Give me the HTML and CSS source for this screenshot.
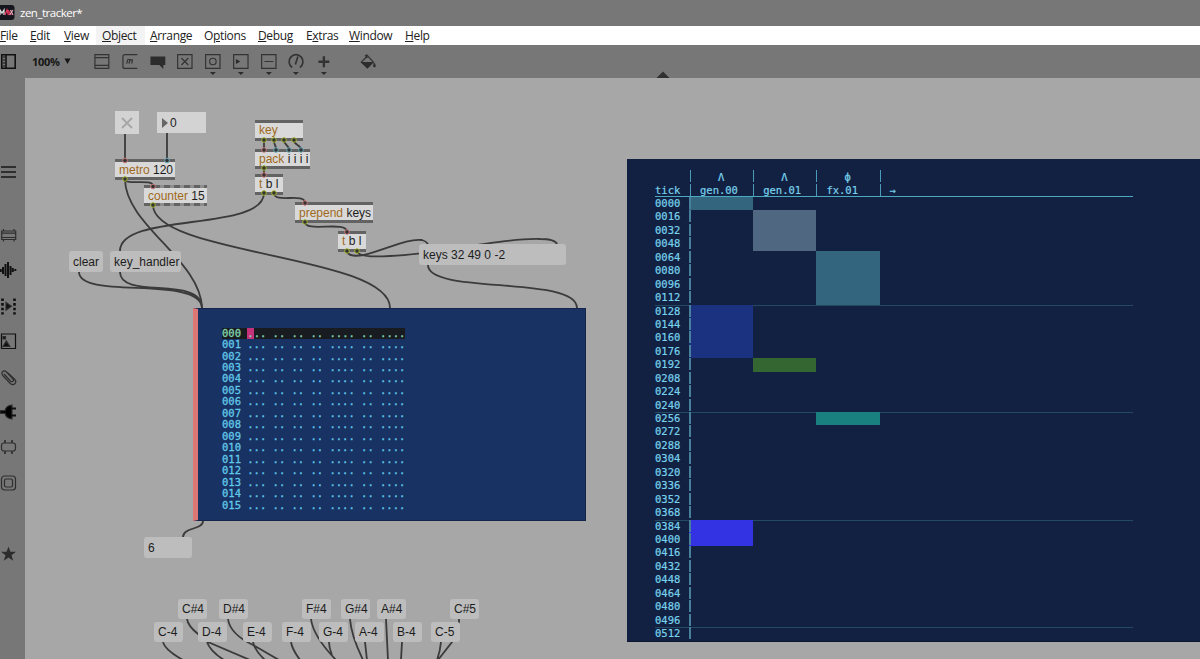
FILE: index.html
```
<!DOCTYPE html>
<html>
	<head>
		<meta charset="UTF-8">
		<title>zen_tracker*</title>
		<link rel="stylesheet" href="styles.css">
	</head>
	<body>
		<div id="window">
			<div id="titlebar">
				<svg width="15" height="15" viewBox="0 0 15 15">
					<rect x="-3" width="17.500" height="15" rx="3" fill="#15151d"/>
					<path d="M0 10V5l2 3 2-3v5" fill="none" stroke="#ddd" stroke-width="1.300"/>
					<path d="M5 10l2-5 1.500 5M8 5l3 5" fill="none" stroke="#e0355c" stroke-width="1.400"/>
					<path d="M13 5l-3.500 5M10.500 5l2.500 5" fill="none" stroke="#e9a3b3" stroke-width="1.200"/>
				</svg>
				<span>zen_tracker*</span>
			</div>
			<div id="menubar">
				<span><u>F</u>ile</span>
				<span><u>E</u>dit</span>
				<span><u>V</u>iew</span>
				<span class="hot"><u>O</u>bject</span>
				<span><u>A</u>rrange</span>
				<span>O<u>p</u>tions</span>
				<span><u>D</u>ebug</span>
				<span>E<u>x</u>tras</span>
				<span><u>W</u>indow</span>
				<span><u>H</u>elp</span>
			</div>
			<div id="toolbar">
				<svg class="panelIcon" width="18" height="33" viewBox="0 0 18 33"><path d="M1.800 9.800h13.400v13.400H1.800zM6 9.800v13.400" fill="none" stroke="#111" stroke-width="1.600"/><path d="M3 12h2M3 15h2M3 18h2M3 21h2" stroke="#111"/></svg>
				<span id="zoom">100%</span>
				<svg class="zoomArrow" width="7" height="33" viewBox="0 0 7 33"><path d="M.5 13.500h6L3.500 19z" fill="#161616"/></svg>
				<svg class="tool" viewBox="0 0 28 33"><path d="M6.500 9.500h15M6.500 12.500h15M6.500 20.500h15M6.500 23.500h15M7 9v14.500M21 9v14.500"/></svg>
				<svg class="tool" viewBox="0 0 28 33"><path d="M21.500 9.500H9q-2 0-2 2v10q0 2 2 2h12.500"/><path d="M10.800 18.700l1-4q2.500-1.200 2 .8l-.7 3.200.8-3.200q3-2 2.500.3l-.5 2.900"/></svg>
				<svg class="tool" viewBox="0 0 28 33"><path class="solid" d="M6.500 11.500h15v8.500h-2v4l-4-4h-9z"/></svg>
				<svg class="tool" viewBox="0 0 28 33"><path d="M6.700 9.500h14.500v14H6.700zM10.500 13l7 7M17.500 13l-7 7"/></svg>
				<svg class="tool" viewBox="0 0 28 33"><path d="M6.700 9.500h14.500v14H6.700z"/><circle cx="14" cy="16.500" r="3.300"/><path class="solid" d="M11 27h6l-3 3.200z"/></svg>
				<svg class="tool" viewBox="0 0 28 33"><path d="M6.700 9.500h14.500v14H6.700z"/><path class="solid" d="M9 14l4.500 2.500L9 19zM11 27h6l-3 3.200z"/></svg>
				<svg class="tool" viewBox="0 0 28 33"><path d="M6.700 9.500h14.500v14H6.700zM9.500 16.500h9"/><path class="solid" d="M11 27h6l-3 3.200z"/></svg>
				<svg class="tool" viewBox="0 0 28 33"><path class="thick" d="M10.300 22.500A7 7 0 1 1 18 22.500M13.500 19.500l2.500-8"/><path class="solid" d="M11 27h6l-3 3.200z"/></svg>
				<svg class="tool" viewBox="0 0 28 33"><path class="plus" d="M14 11.200v11M8.500 16.700h11"/><path class="solid" d="M11 27h6l-3 3.200z"/></svg>
				<svg class="tool bucket" viewBox="0 0 28 33"><path d="M11 11l2-1 6.500 7-6 6-6-6 5-5"/><path class="solid" d="M6.500 17h13l-6 6.200zM12 9l2 4h-2zM20 17q3 4 1.500 5-3 1-2-2z"/></svg>
				<svg class="fold" width="14" height="7" viewBox="0 0 14 7"><path d="M.5 7L7 .5 13.500 7z" fill="#303030"/></svg>
			</div>
			<div id="main">
				<div id="sidebar">
					<svg class="menuIcon" viewBox="0 0 17 18"><path class="bold" d="M1 4h15M1 9h15M1 14h15"/></svg>
					<svg viewBox="0 0 17 18"><path d="M1.700 5h14v8.500h-14zM1.700 7.200h14M3.500 3v2M14 3v2M3.500 13.500v2M14 13.500v2M1.700 11.500h14"/></svg>
					<svg viewBox="0 0 17 18"><path class="bold black" d="M.8 8v3M3 6v7M5.500 3v12M8 1v16M10.500 5v9M12.800 7v4M15.300 8v2"/></svg>
					<svg viewBox="0 0 17 18"><path class="film" d="M2.500 1.500v16M14.500 1.500v16"/><path d="M6 5.500l5.500 3.700L6 13z" fill="#111"/></svg>
					<svg viewBox="0 0 17 18"><path class="black" d="M1.500 2h14v14.500h-14z"/><path d="M3 14.500l3.300-5.500 3.500 5.500zM3 4.500h2.500V7H3z" fill="#111"/></svg>
					<svg viewBox="0 0 17 18"><path d="M4 6l6.500 7q1.500 1.300 2.500.3t0-2.300L6.500 4Q4.500 2 2.800 3.500t0 4l7.500 8q2.500 2 4.500.2t0-4.200L8 5"/></svg>
					<svg viewBox="0 0 17 18"><path d="M12 2v14Q6 15.500 5 10.300H0V7.700h5Q6 2.500 12 2z" fill="#000"/><path class="bold black" d="M11 5.500h5M11 12.500h5"/></svg>
					<svg viewBox="0 0 17 18"><rect x="1.500" y="5" width="14" height="8" rx="2.500"/><path class="thick" d="M5 2v3M12 2v3M5 13v3M12 13v3"/></svg>
					<svg viewBox="0 0 17 18"><rect x="1.500" y="2" width="14" height="14" rx="3"/><rect x="4.500" y="5" width="8" height="8" rx="1.500"/></svg>
					<svg class="star" viewBox="0 0 17 18"><path d="M8.500 1.500l1.900 5.300h5.600l-4.500 3.500 1.700 5.500-4.700-3.300-4.700 3.300 1.700-5.500L1 6.800h5.600z" fill="#2c2c2c" stroke="none"/></svg>
				</div>
				<div id="patcher"></div>
			</div>

			<!-- objects -->
			<svg id="cords" width="1200" height="659" viewBox="0 0 1200 659">
				<path d="M125 133V161M167 133V161"/>
				<path d="M125 179C125 186 153 178 153 186"/>
				<path d="M125 179C125 225 201 260 202 308"/>
				<path d="M153 205C153 255 390 255 390 308"/>
				<path d="M264 140V150M274 140C274 146 276 144 276 150M284 140C284 146 289 144 289 150M294 140C294 146 301 144 301 150"/>
				<path d="M264 168V175"/>
				<path d="M264 193C264 232 120 212 120 251"/>
				<path d="M274 193C274 204 305 192 305 203"/>
				<path d="M305 222C305 233 347 220 347 232"/>
				<path d="M347 251C348 257 357 256 364 255C385 250 408 238 422 240Q426 241 428 244"/>
				<path d="M357 251C358 257 375 257 390 256C440 254 500 238 540 239Q555 239 557 244"/>
				<path d="M428 265C428 295 577 275 577 308"/>
				<path d="M79 272C79 300 201 275 202 308M120 272C120 300 202 275 202 308"/>
				<path d="M203 521C203 530 183 527 183 537"/>
				<path d="M163 642Q165 650 183 660M187 619Q188 626 198 634L208 642L250 660M207 642Q210 651 224 660M228 619Q230 634 253 645L279 660M253 642Q255 651 265 660M291 642Q292 649 300 660"/>
				<path d="M311 619Q313 636 336 660M329 642Q329 648 332 655M350 619Q351 635 363 660M365 642L367 660M386 619L388 660M402 642L401 660M441 642Q440 652 437 660M459 619V622L452 642L438 660"/>
			</svg>
			<div class="toggle"><svg width="12" height="12" viewBox="0 0 12 12"><path d="M1 1l10 10M11 1L1 11" stroke="#a6a6a6" stroke-width="1.800"/></svg></div>
			<div class="number"><svg width="6" height="10" viewBox="0 0 6 10"><path d="M0 0l6 5-6 5z" fill="#666"/></svg>0</div>
			<div class="object metro"><b>metro</b> 120</div>
			<div class="object counter"><b>counter</b> 15</div>
			<div class="object key"><b>key</b></div>
			<div class="object pack"><b>pack</b> i i i i</div>
			<div class="object trigger1"><b>t</b> b l</div>
			<div class="object prepend"><b>prepend</b> keys</div>
			<div class="object trigger2"><b>t</b> b l</div>
			<div class="message clear">clear</div>
			<div class="message handler">key_handler</div>
			<div class="message keys">keys 32 49 0 -2</div>
			<div class="message six">6</div>
			<div id="notes"></div>
			<svg id="ports" width="1200" height="659" viewBox="0 0 1200 659"></svg>

			<div id="pattern"></div>
			<div id="tracker">
				<div class="head">
					<span>tick</span>
					<span class="track"><em>Λ</em>gen.00</span>
					<span class="track"><em>Λ</em>gen.01</span>
					<span class="track"><em>ф</em>fx.01</span>
					<span class="track"><em></em>→</span>
				</div>
				<div class="rows"></div>
			</div>
		</div>

		<script type="text/javascript">
			//pattern rows
			var pattern = document.getElementById('pattern');
			for(var i = 0;i<16;i++){
				var num = ('00'+i).slice(-3);
				var first = i == 0 ? '<i>.</i>' : '.';
				pattern.innerHTML += '<div class="line">'+num+' '+first+'.. .. .. .. .... .. ....</div>';
			}

			//song rows, 16 ticks each
			var clips = {
				0:[0,'teal'], 1:[1,'slate'], 2:[1,'slate'], 3:[1,'slate'],
				4:[2,'teal'], 5:[2,'teal'], 6:[2,'teal'], 7:[2,'teal'],
				8:[0,'navy'], 9:[0,'navy'], 10:[0,'navy'], 11:[0,'navy'],
				12:[1,'green'], 16:[2,'aqua'], 24:[0,'blue'], 25:[0,'blue']
			};
			var html = '';
			for(var r = 0;r<33;r++){
				html += '<div class="row'+(r > 0 && r % 8 == 0 ? ' bar' : '')+'"><span>'+('000'+r*16).slice(-4)+'</span>';
				for(var c = 0;c<3;c++){
					var on = clips[r] && clips[r][0] == c;
					html += '<span class="cell'+(on ? ' '+clips[r][1] : '')+'"></span>';
				}
				html += '</div>';
			}
			document.querySelector('#tracker .rows').innerHTML = html;

			//note messages: name, x, y
			var notes = [
				['C#4',178,599],['D#4',219,599],['F#4',302,599],['G#4',341,599],['A#4',377,599],['C#5',450,599],
				['C-4',154,622],['D-4',198,622],['E-4',243,622],['F-4',282,622],['G-4',319,622],['A-4',355,622],['B-4',393,622],['C-5',431,622]
			];
			for(var n = 0;n<notes.length;n++){
				var box = document.createElement('div');
				box.className = 'message note';
				box.innerHTML = notes[n][0];
				box.style.left = notes[n][1]+'px';
				box.style.top = notes[n][2]+'px';
				document.getElementById('notes').appendChild(box);
			}

			//inlets and outlets
			var ports = [
				[125,160.500,'#c77'],[167,160.500,'#6ab'],[125,179,'#a5b52c'],[153,186.500,'#c77'],[153,205,'#a5b52c'],
				[264,140,'#a5b52c'],[274,140,'#a5b52c'],[284,140,'#a5b52c'],[294,140,'#a5b52c'],
				[264,150,'#c77'],[276,150,'#6ab'],[289,150,'#6ab'],[301,150,'#6ab'],
				[264,168,'#a5b52c'],[264,175,'#c77'],[264,193,'#a5b52c'],[274,193,'#a5b52c'],
				[305,203,'#c77'],[305,222,'#a5b52c'],[347,232,'#c77'],[347,251,'#a5b52c'],[357,251,'#a5b52c']
			];
			var dots = '';
			for(var p = 0;p<ports.length;p++){
				dots += '<circle cx="'+ports[p][0]+'" cy="'+ports[p][1]+'" r="2.3" stroke="'+ports[p][2]+'"/>';
			}
			document.getElementById('ports').innerHTML = dots;
		</script>
	</body>
</html>
```
FILE: styles.css
```
*{
	box-sizing: border-box;
}
body{
	margin: 0;
	overflow: hidden;
}
#window{
	position: relative;
	width: 1200px;
	height: 659px;
	overflow: hidden;
	display: flex;
	flex-direction: column;
	background: #777;
	font-family: "Liberation Sans", Arial, sans-serif;
}
#titlebar{
	height: 26px;
	display: flex;
	align-items: center;
	gap: 5px;
	padding-bottom: 2px;
	color: #fff;
	font: 11.5px "Open Sans", sans-serif;
	letter-spacing: -0.5px;
}
#menubar{
	height: 19px;
	display: grid;
	grid-template-columns: 30px 34px 38px 48px 54px 54px 48px 43px 56px 40px;
	background: #fff;
	color: #222;
	font: 12px/19px "Open Sans", sans-serif;
	letter-spacing: -0.35px;
	white-space: nowrap;
}
#menubar u{
	text-underline-offset: 1px;
}
#menubar .hot{
	background: #f3f3f3;
	margin: 0 5px 0 -6px;
	padding-left: 6px;
}
#toolbar{
	height: 33px;
	display: flex;
	position: relative;
	color: #161616;
}
#zoom{
	width: 32px;
	margin-left: 14px;
	font: bold 11px/33px "Open Sans", sans-serif;
	letter-spacing: -0.3px;
}
.zoomArrow{
	margin-right: 17px;
}
.tool{
	width: 27.75px;
	height: 33px;
	fill: none;
	stroke: #333;
	stroke-width: 1.2;
}
.tool .solid{
	fill: #2c2c2c;
	stroke: none;
}
.tool .thick{
	stroke-width: 1.7;
}
.tool .plus{
	stroke-width: 2.4;
}
.bucket{
	margin-left: 16px;
}
.fold{
	position: absolute;
	left: 656px;
	bottom: 0;
}
#main{
	flex: 1;
	display: flex;
}
#sidebar{
	width: 25px;
	padding-top: 85px;
	display: flex;
	flex-direction: column;
	gap: 17.4px;
}
#sidebar svg{
	width: 17px;
	height: 18px;
	flex: none;
	fill: none;
	stroke: #2e2e2e;
	stroke-width: 1.2;
}
#sidebar .menuIcon{
	margin-bottom: 27.6px;
}
#sidebar .star{
	margin-top: 35.4px;
}
#sidebar .bold{
	stroke-width: 2;
}
#sidebar .thick{
	stroke-width: 1.7;
}
#sidebar .black{
	stroke: #111;
}
#sidebar .film{
	stroke: #111;
	stroke-width: 2.6;
	stroke-dasharray: 2.6 2;
}
#patcher{
	flex: 1;
	background: #a7a7a7;
}

/* patcher contents */
#cords, #ports{
	position: absolute;
	left: 0;
	top: 0;
	fill: none;
	stroke: #3b3b3b;
	stroke-width: 1.8;
}
#ports{
	fill: #333;
	stroke-width: 1;
}
.toggle, .number, .object, .message{
	position: absolute;
	font-size: 12px;
	color: #1c1c1c;
	white-space: nowrap;
}
.toggle{
	left: 115px;
	top: 111px;
	width: 24px;
	height: 23px;
	display: flex;
	align-items: center;
	justify-content: center;
	background: #d3d3d3;
}
.number{
	left: 157px;
	top: 112px;
	width: 49px;
	height: 21px;
	display: flex;
	align-items: center;
	gap: 2px;
	padding-left: 5px;
	background: #d3d3d3;
}
.object{
	height: 21px;
	line-height: 16px;
	padding-left: 4px;
	background: #d9d9d9;
	border-top: 3px solid #636363;
	border-bottom: 3px solid #636363;
}
.object b{
	font-weight: normal;
	color: #a06a1c;
}
.metro{
	left: 115px;
	top: 159px;
	width: 60px;
}
.counter{
	left: 144px;
	top: 185px;
	width: 63px;
	border-color: transparent;
	background: linear-gradient(#d9d9d9, #d9d9d9) padding-box, repeating-linear-gradient(90deg, #636363 0 6px, #8e8e8e 6px 10px) border-box;
}
.key{
	left: 255px;
	top: 120px;
	width: 48px;
	line-height: 15px;
}
.pack{
	left: 255px;
	top: 149px;
	width: 55px;
	height: 20px;
	line-height: 15px;
}
.trigger1{
	left: 255px;
	top: 174px;
	width: 28px;
	line-height: 15px;
}
.prepend{
	left: 295px;
	top: 202px;
	width: 78px;
}
.trigger2{
	left: 338px;
	top: 231px;
	width: 28px;
	line-height: 15px;
}
.message{
	height: 21px;
	line-height: 22px;
	padding-left: 4px;
	border-radius: 3px;
	background: #bdbdbd;
}
.clear{
	left: 69px;
	top: 251px;
	width: 34px;
}
.handler{
	left: 110px;
	top: 251px;
	width: 71px;
}
.keys{
	left: 419px;
	top: 244px;
	width: 147px;
}
.six{
	left: 144px;
	top: 537px;
	width: 48px;
}
.note{
	width: 29px;
	height: 20px;
	line-height: 20px;
}
#pattern{
	position: absolute;
	left: 193px;
	top: 308px;
	width: 393px;
	height: 213px;
	padding: 18.6px 0 0 24px;
	background: #183264;
	border: 1px solid #14244a;
	border-left: 5px solid #dc7774;
	font: 10.5px/11.47px "DejaVu Sans Mono", monospace;
	color: #62c8e8;
	-webkit-text-stroke: 0.3px;
	white-space: pre;
}
.line{
	width: 183px;
	height: 11.47px;
}
.line:first-child{
	background: #181c20;
	color: #85d5b0;
}
.line i{
	display: inline-block;
	font-style: normal;
	background: #c5317a;
}
#tracker{
	position: absolute;
	left: 627px;
	top: 159px;
	width: 573px;
	height: 483px;
	padding: 10px 67px 0 28px;
	background: #122142;
	border-bottom: 1px solid #0b1630;
	font: 10.5px/13.44px "DejaVu Sans Mono", monospace;
	color: #79d2ec;
	-webkit-text-stroke: 0.2px;
}
.head, .row{
	display: grid;
	grid-template-columns: 35px 63.2px 63.2px 63.2px 1fr;
}
.head{
	height: 28px;
	border-bottom: 1.5px solid #4ba9c2;
	align-items: end;
	line-height: 12px;
}
.track{
	padding-left: 10px;
	white-space: nowrap;
	background: linear-gradient(#4a9ab8 12px, transparent 12px 14px, #4a9ab8 14px) no-repeat 0 0/1px 100%;
}
.track em{
	display: block;
	height: 14px;
	padding-left: 18px;
	font-style: normal;
	line-height: 14px;
}
.row{
	height: 13.44px;
}
.bar{
	box-shadow: inset 0 1px #234a62;
}
.cell:nth-child(2){
	background-image: linear-gradient(#477f9d 12.2px, transparent 12.2px);
	background-size: 2px 100%;
	background-repeat: no-repeat;
	margin-left: -1px;
}
.teal{ background-color: #33657f; }
.slate{ background-color: #4f6780; }
.navy{ background-color: #1a327f; }
.green{ background-color: #346632; }
.aqua{ background-color: #1a7f7f; }
.blue{ background-color: #3333e4; }
```
